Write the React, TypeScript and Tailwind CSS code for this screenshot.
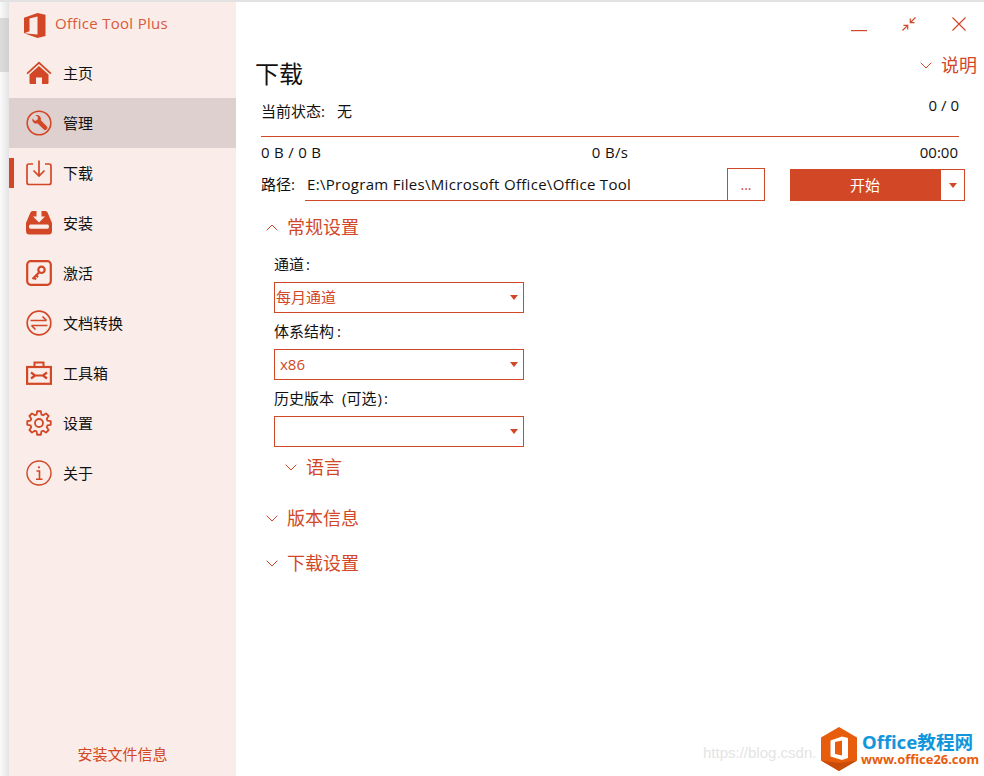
import React from 'react';

const ACCENT = '#d24726';

const gearPath = (() => {
  const pts: string[] = [];
  for (let i = 0; i < 8; i++) {
    const a = (i * Math.PI) / 4 - Math.PI / 2;
    const step = Math.PI / 4;
    const at = (r: number, t: number) => `${(13 + r * Math.cos(t)).toFixed(2)} ${(13 + r * Math.sin(t)).toFixed(2)}`;
    pts.push(`L${at(8.8, a - step * 0.36)}`, `L${at(11.9, a - step * 0.2)}`, `L${at(11.9, a + step * 0.2)}`, `L${at(8.8, a + step * 0.36)}`);
  }
  return `M${pts.join(' ').slice(1)} Z`;
})();

const HomeIcon = () => (
  <svg viewBox="0 0 26 24" className="w-[26px] h-[24px]" fill={ACCENT}>
    <path d="M13 .5 L25.5 12 L24.3 13.2 L13 3 L1.7 13.2 L.5 12 Z" />
    <path d="M13 5 L22.5 13.5 V22 Q22.5 23 21.5 23 H16 V16.5 H10 V23 H4.5 Q3.5 23 3.5 22 V13.5 Z" />
  </svg>
);

const ManageIcon = () => (
  <svg viewBox="0 0 26 26" className="w-[26px] h-[26px]" fill="none" stroke={ACCENT}>
    <circle cx="13" cy="13" r="11.8" strokeWidth="1.6" />
    <path d="M6.5 8.5 L9 11 L11.5 9.8 L12 7 L9.5 5.2 C13 4.3 15.5 7 14.8 10.3 L21 16.5 C21.8 17.5 21.4 18.6 20.6 19.4 C19.7 20.2 18.6 20.3 17.8 19.5 L11.7 13.4 C8.3 14.2 5.6 11.8 6.5 8.5 Z" fill={ACCENT} stroke="none" />
  </svg>
);

const DownloadIcon = () => (
  <svg viewBox="0 0 26 26" className="w-[26px] h-[26px]" fill="none" stroke={ACCENT} strokeWidth="1.7">
    <path d="M7 4 H3 Q1 4 1 6 V22.5 Q1 24.5 3 24.5 H23 Q25 24.5 25 22.5 V6 Q25 4 23 4 H19" />
    <path d="M13 .5 V16 M7.5 10.5 L13 16 L18.5 10.5" />
  </svg>
);

const InstallIcon = () => (
  <svg viewBox="0 0 26 24" className="w-[26px] h-[24px]" fill={ACCENT}>
    <path
      fillRule="evenodd"
      d="M6.5 0 H10.5 V5.5 H7 L13 11.5 L19 5.5 H15.5 V0 H19.5 Q21 0 21.7 1.8 L26 12 V20 Q26 23.5 22.5 23.5 H3.5 Q0 23.5 0 20 V12 L4.3 1.8 Q5 0 6.5 0 Z M4.5 13.5 Q3 13.5 3 15.5 Q3 17.8 4.5 17.8 H21.5 Q23 17.8 23 15.5 Q23 13.5 21.5 13.5 Z"
    />
  </svg>
);

const KeyIcon = () => (
  <svg viewBox="0 0 26 26" className="w-[26px] h-[26px]" fill="none" stroke={ACCENT}>
    <rect x="1.2" y="1.2" width="23.6" height="23.6" rx="3.5" strokeWidth="2.2" />
    <circle cx="15.5" cy="9.8" r="3.2" strokeWidth="2.2" />
    <path d="M13 12.5 L6.5 19 M8 17.5 L10 19.5 M10.2 15.3 L12 17.1" strokeWidth="2.2" />
  </svg>
);

const ConvertIcon = () => (
  <svg viewBox="0 0 26 26" className="w-[26px] h-[26px]" fill="none" stroke={ACCENT}>
    <circle cx="13" cy="13" r="11.8" strokeWidth="1.7" />
    <path d="M4.5 10.5 H20.5 M16.5 6.5 L20.5 10.5 M21.5 15.5 H5.5 M9.5 19.5 L5.5 15.5" strokeWidth="1.7" />
  </svg>
);

const ToolboxIcon = () => (
  <svg viewBox="0 0 26 24" className="w-[26px] h-[24px]" fill="none" stroke={ACCENT}>
    <path d="M8.5 6 V1.5 H17.5 V6" strokeWidth="2" />
    <rect x="1.1" y="6" width="23.8" height="16.8" strokeWidth="2.2" />
    <path d="M5 11.5 L9 14.5 H17 L21 11.5 M5 17.5 L9 14.5 M17 14.5 L21 17.5" strokeWidth="2.2" />
  </svg>
);

const GearIcon = () => (
  <svg viewBox="0 0 26 26" className="w-[26px] h-[26px]" fill="none" stroke={ACCENT} strokeWidth="1.8" strokeLinejoin="round">
    <circle cx="13" cy="13" r="4" />
    <path d={gearPath} />
  </svg>
);

const InfoIcon = () => (
  <svg viewBox="0 0 26 26" className="w-[26px] h-[26px]" fill="none" stroke={ACCENT} strokeWidth="1.4">
    <circle cx="13" cy="13" r="12" />
    <circle cx="13" cy="7.3" r="1.1" fill={ACCENT} stroke="none" />
    <path d="M10.5 11 H13.5 V19 M10 19.2 H16.5" strokeWidth="1.6" />
  </svg>
);

const OfficeLogo = () => (
  <svg viewBox="0 0 22 25" className="w-[22px] h-[25px]" fill={ACCENT}>
    <path fillRule="evenodd" d="M0 4.8 L13.5 0 L21.5 1.8 V23 L13.5 25 L0 20.2 Z M13.5 3.5 L5.5 5.5 V18.2 L0 20.2 L13.5 21.5 Z" />
  </svg>
);

const Chevron = ({ up }: { up?: boolean }) => (
  <svg viewBox="0 0 12 7" className="w-[12px] h-[7px]" fill="none" stroke={ACCENT} strokeWidth="1">
    <path d={up ? 'M.7 6.3 L6 1 L11.3 6.3' : 'M.7 .7 L6 6 L11.3 .7'} />
  </svg>
);

const Caret = ({ color = ACCENT }: { color?: string }) => (
  <div className="w-0 h-0 border-l-[4px] border-r-[4px] border-t-[5px] border-l-transparent border-r-transparent" style={{ borderTopColor: color }} />
);

const NAV = [
  { label: '主页', icon: <HomeIcon /> },
  { label: '管理', icon: <ManageIcon />, hover: true },
  { label: '下载', icon: <DownloadIcon />, active: true },
  { label: '安装', icon: <InstallIcon /> },
  { label: '激活', icon: <KeyIcon /> },
  { label: '文档转换', icon: <ConvertIcon /> },
  { label: '工具箱', icon: <ToolboxIcon /> },
  { label: '设置', icon: <GearIcon /> },
  { label: '关于', icon: <InfoIcon /> },
];

const Section = ({ label, up, className }: { label: string; up?: boolean; className: string }) => (
  <div className={`flex items-center h-[26px] text-[18px] leading-[26px] text-[#d24726] ${className}`}>
    <Chevron up={up} />
    <span className="ml-[9px]">{label}</span>
  </div>
);

const Select = ({ value, valueClass }: { value?: string; valueClass?: string }) => (
  <div className="flex items-center justify-between w-[250px] h-[31px] border border-[#d24726] text-[15px] text-[#d24726] pr-[4px]">
    <span className={valueClass}>{value}</span>
    <span className="mr-[1px]"><Caret /></span>
  </div>
);

const Field = ({ label, children, className }: { label: React.ReactNode; children: React.ReactNode; className: string }) => (
  <div className={className}>
    <div className="h-[18px] leading-[18px] text-[15px] text-[#111] mb-[9px]">{label}</div>
    {children}
  </div>
);

const Watermark = () => (
  <div className="absolute left-[700px] top-[726px] w-[284px] h-[46px]">
    <span className="absolute left-[3px] top-[17px] text-[15px] leading-[20px] text-[#e4e4e4] font-['Liberation_Sans',sans-serif] whitespace-nowrap">https://blog.csdn.</span>
    <svg viewBox="0 0 36 44" className="absolute left-[121px] top-[1px] w-[36px] h-[44px]">
      <path d="M18 0 L36 10.5 V33.5 L18 44 L0 33.5 V10.5 Z" fill="#e85c0d" />
      <path d="M18 36 L36 33.5 L18 44 L0 33.5 Z" fill="#c84c08" />
      <path d="M9.5 13.5 L21 9.5 L27 11 V31 L21 33 L9.5 29.5 Z" fill="#ffffff" />
      <path d="M14 15 L21 13.5 V28.5 L14 27 Z" fill="#e85c0d" />
    </svg>
    <div className="absolute left-[162px] top-[6px] h-[20px] flex items-center text-[18.6px] leading-[20px] font-bold text-[#1296db] font-['Noto_Sans','Noto_Sans_CJK_SC',sans-serif] whitespace-nowrap">Office教程网</div>
    <div className="absolute left-[161px] top-[26px] h-[14px] flex items-center text-[12.9px] leading-[14px] font-bold text-[#e85c0d] font-['Noto_Sans',sans-serif] whitespace-nowrap">www.office26.com</div>
  </div>
);

const App = () => {
  return (
    <div className="relative w-[984px] h-[776px] overflow-hidden bg-white font-['Open_Sans','Noto_Sans_CJK_SC',sans-serif]">
      <div className="h-[2px] bg-[#e2e2e2]" />
      <div className="flex h-[774px]">
        {/* window shadow on the left */}
        <div className="w-[9px] flex flex-col bg-gradient-to-r from-[#fafafa] to-[#e4e4e4]">
          <div className="h-[16px]" />
          <div className="h-[54px] bg-gradient-to-r from-[#dcdcdc] to-[#d0d0d0]" />
        </div>

        <aside className="w-[227px] flex flex-col bg-[#faede9]">
          <div className="h-[46px] flex items-center pl-[15px]">
            <OfficeLogo />
            <span className="ml-[9px] pb-[4px] text-[15px] tracking-[0.3px] text-[#d9583a]">Office Tool Plus</span>
          </div>
          {NAV.map((item) => (
            <div key={item.label} className={`relative h-[50px] flex items-center pl-[17px] ${item.hover ? 'bg-[#ddd0ce]' : ''}`}>
              {item.active && <div className="absolute left-0 top-[10px] w-[5px] h-[30px] bg-[#d24726]" />}
              <div className="w-[26px] flex justify-center">{item.icon}</div>
              <span className="ml-[11px] text-[15px] leading-[20px] text-[#111]">{item.label}</span>
            </div>
          ))}
          <div className="mt-auto h-[32px] text-center text-[15px] leading-[20px] text-[#d24726]">安装文件信息</div>
        </aside>

        <main className="flex-1 flex flex-col">
          <div className="h-[46px] flex justify-end items-start pr-[18px]">
            <svg viewBox="0 0 16 2" className="w-[16px] h-[2px] mt-[28px]" fill={ACCENT}><rect width="16" height="1.2" /></svg>
            <svg viewBox="0 0 14 14" className="w-[14px] h-[14px] mt-[15px] ml-[35px]" fill="none" stroke={ACCENT} strokeWidth="1.2">
              <path d="M13.5 .5 L8.3 5.7 M8.3 1.5 V5.7 H12.5 M.5 13.5 L5.7 8.3 M1.5 8.3 H5.7 V12.5" />
            </svg>
            <svg viewBox="0 0 14 14" className="w-[14px] h-[14px] mt-[15px] ml-[36px]" fill="none" stroke={ACCENT} strokeWidth="1.2">
              <path d="M.5 .5 L13.5 13.5 M13.5 .5 L.5 13.5" />
            </svg>
          </div>

          <div className="flex justify-between items-start pl-[19px] pr-[7px] h-[46px]">
            <h1 className="text-[24px] leading-[54px] -mt-[1px] font-normal text-[#111]">下载</h1>
            <div className="flex items-center h-[34px] text-[18px] text-[#d24726]">
              <Chevron />
              <span className="ml-[9px]">说明</span>
            </div>
          </div>

          <div className="pl-[25px] pr-[25px]">
            <div className="flex justify-between h-[28px] text-[15px] text-[#111]">
              <span className="leading-[34px]">当前状态:<span className="ml-[12px]">无</span></span>
              <span className="leading-[22px]">0 / 0</span>
            </div>
            <div className="mt-[14px] h-px bg-[#d24726]" />
            <div className="grid grid-cols-3 h-[31px] items-center text-[15px] tracking-[0.3px] text-[#111]">
              <span>0 B / 0 B</span>
              <span className="text-center">0 B/s</span>
              <span className="text-right pr-px tracking-normal">00:00</span>
            </div>
          </div>

          <div className="flex items-stretch h-[33px] pl-[25px] pr-[19px]">
            <span className="w-[44px] text-[15px] leading-[33px] text-[#111]">路径:</span>
            <div className="w-[422px] border-b border-[#d24726] pl-[2px] text-[15px] tracking-[0.3px] leading-[32px] text-[#111] whitespace-nowrap">E:\Program Files\Microsoft Office\Office Tool</div>
            <div className="w-[38px] border border-[#d24726] flex items-center justify-center text-[14px] text-[#d24726]">...</div>
            <div className="ml-[25px] mt-px w-[151px] bg-[#d24726] flex items-center justify-center text-[15px] pr-px text-white">开始</div>
            <div className="mt-px w-[24px] border border-l-0 border-[#d24726] flex items-center justify-center"><Caret /></div>
          </div>

          <div className="pl-[30px]">
            <Section label="常规设置" up className="mt-[13px]" />
            <div className="pl-[8px] mt-[15px]">
              <Field label={<>通道<span className="ml-[2px]">:</span></>} className="">
                <Select value="每月通道" valueClass="pl-px" />
              </Field>
              <Field label={<>体系结构<span className="ml-[3px]">:</span></>} className="mt-[9px]">
                <Select value="x86" valueClass="pl-[5px]" />
              </Field>
              <Field label={<>历史版本<span className="ml-[8px]">(</span>可选<span className="ml-px">)</span><span className="ml-[2px]">:</span></>} className="mt-[9px]">
                <Select />
              </Field>
            </div>
            <Section label="语言" className="ml-[19px] mt-[7px]" />
            <Section label="版本信息" className="mt-[25px]" />
            <Section label="下载设置" className="mt-[19px]" />
          </div>
        </main>
      </div>
      <Watermark />
    </div>
  );
};

export default App;
